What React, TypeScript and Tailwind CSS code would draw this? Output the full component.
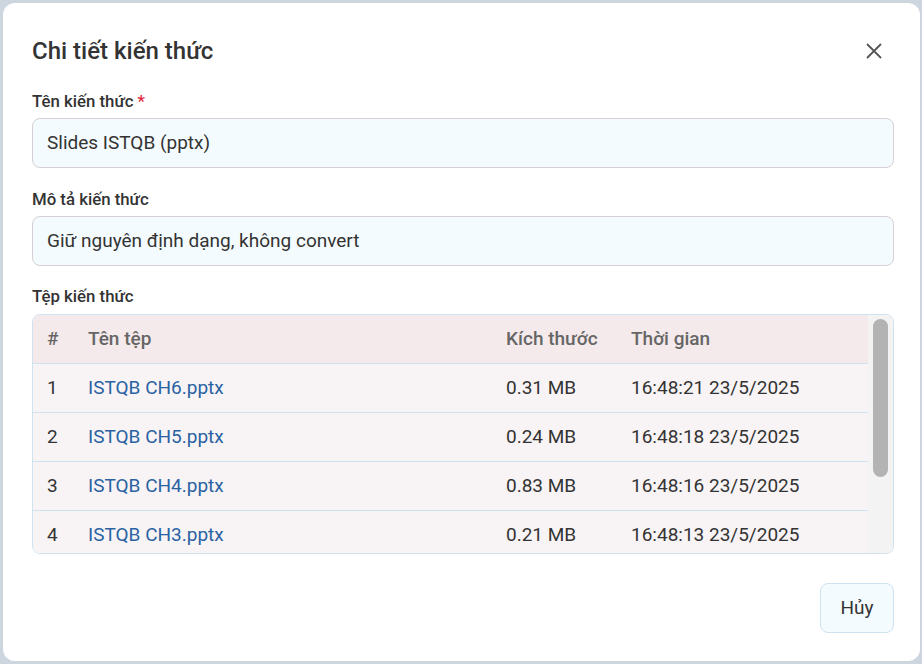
import React from 'react';

const files = [
  { id: 1, name: 'ISTQB CH6.pptx', size: '0.31 MB', time: '16:48:21 23/5/2025' },
  { id: 2, name: 'ISTQB CH5.pptx', size: '0.24 MB', time: '16:48:18 23/5/2025' },
  { id: 3, name: 'ISTQB CH4.pptx', size: '0.83 MB', time: '16:48:16 23/5/2025' },
  { id: 4, name: 'ISTQB CH3.pptx', size: '0.21 MB', time: '16:48:13 23/5/2025' },
  { id: 5, name: 'ISTQB CH2.pptx', size: '0.45 MB', time: '16:48:10 23/5/2025' },
  { id: 6, name: 'ISTQB CH1.pptx', size: '0.38 MB', time: '16:48:07 23/5/2025' },
];

const Field: React.FC<{ label: string; value: string; required?: boolean }> = ({ label, value, required }) => (
  <div>
    <label className="block text-[16.8px] leading-[22px] font-medium text-[#333]">
      {label}
      {required && <span className="text-[#e5283a]"> *</span>}
    </label>
    <div className="mt-[6px] h-[50px] flex items-center px-[14px] rounded-[8px] border border-[#d6cfd3] bg-[#f4fbfe] text-[19px] text-[#333]">
      {value}
    </div>
  </div>
);

export default function App() {
  return (
    <div
      className="min-h-screen w-full bg-[#cdd5de] p-[3px]"
      style={{ fontFamily: 'Roboto, "Noto Sans", sans-serif' }}
    >
      <div className="w-[917px] h-[658px] rounded-[12px] bg-white pl-[29px] pr-[26px] pt-[32px] flex flex-col">
        <div className="flex items-center justify-between h-[32px]">
          <h2 className="text-[24px] leading-[32px] font-medium text-[#333]">Chi tiết kiến thức</h2>
          <button className="w-[24px] h-[24px] flex items-center justify-center mr-[8px] text-[#555]">
            <svg width="16" height="16" viewBox="0 0 16 16" fill="none" stroke="currentColor" strokeWidth="1.8" strokeLinecap="round">
              <path d="M1.5 1.5 L14.5 14.5 M14.5 1.5 L1.5 14.5" />
            </svg>
          </button>
        </div>

        <div className="mt-[23px]">
          <Field label="Tên kiến thức" value="Slides ISTQB (pptx)" required />
        </div>
        <div className="mt-[20px]">
          <Field label="Mô tả kiến thức" value="Giữ nguyên định dạng, không convert" />
        </div>

        <div className="mt-[19px]">
          <div className="text-[16.8px] leading-[22px] font-medium text-[#333]">Tệp kiến thức</div>
          <div className="mt-[7px] rounded-[8px] border border-[#cfe2f0] overflow-hidden flex h-[240px]">
            <div className="flex-1 overflow-hidden">
              <div className="grid grid-cols-[41px_418px_125px_1fr] h-[49px] items-center bg-[#f5eaeb] border-b border-[#cfe2f0] text-[19px] font-medium text-[#666]">
                <div className="pl-[14px]">#</div>
                <div className="pl-[14px]">Tên tệp</div>
                <div className="pl-[14px]">Kích thước</div>
                <div className="pl-[14px]">Thời gian</div>
              </div>
              {files.map((f) => (
                <div
                  key={f.id}
                  className="grid grid-cols-[41px_418px_125px_1fr] h-[49px] items-center bg-[#f8f4f5] border-b border-[#cfe2f0] text-[19px] text-[#333]"
                >
                  <div className="pl-[14px]">{f.id}</div>
                  <div className="pl-[14px]">
                    <a className="text-[#2a62a2] cursor-pointer">{f.name}</a>
                  </div>
                  <div className="pl-[14px]">{f.size}</div>
                  <div className="pl-[14px]">{f.time}</div>
                </div>
              ))}
            </div>
            <div className="w-[25px] bg-[#f3f3f3] px-[5px] pt-[4px]">
              <div className="h-[158px] rounded-full bg-[#b3b3b3]" />
            </div>
          </div>
        </div>

        <div className="mt-[29px] flex justify-end">
          <button className="h-[50px] w-[74px] rounded-[8px] border border-[#cfe2f0] bg-[#f4fbfe] text-[19px] text-[#333]">
            Hủy
          </button>
        </div>
      </div>
    </div>
  );
}
